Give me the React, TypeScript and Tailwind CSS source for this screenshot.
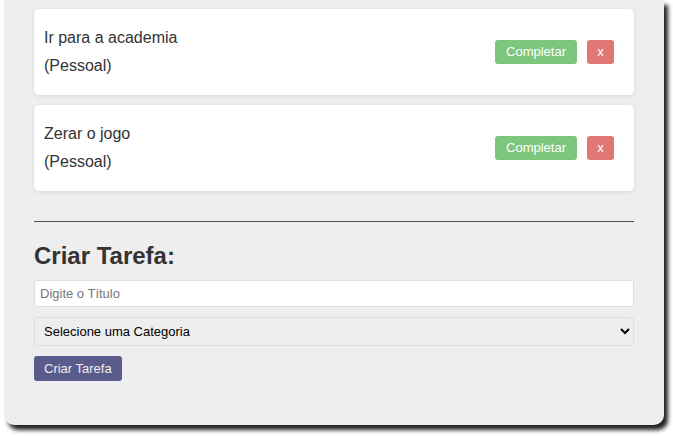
export default function App() {
  const tasks = [
    { title: 'Ir para a academia', category: 'Pessoal' },
    { title: 'Zerar o jogo', category: 'Pessoal' },
  ]

  return (
    <div className="min-h-[436px] bg-white pl-[4px] font-['Liberation_Sans',Arial,sans-serif] text-[#333]">
      <div className="w-[660px] rounded-b-[10px] bg-[#eeeeee] px-[30px] pt-[9px] pb-[44px] shadow-[4px_5px_4px_#222]">
        {/* task list */}
        <div className="flex flex-col gap-[10px]">
          {tasks.map((t) => (
            <div
              key={t.title}
              className="flex items-center justify-between rounded-[5px] bg-white py-[15px] pl-[10px] pr-[20px] shadow-[0_1px_4px_rgba(0,0,0,0.1)]"
            >
              <div className="text-[16px] leading-[28px]">
                <p>{t.title}</p>
                <p>({t.category})</p>
              </div>
              <div className="flex gap-[10px]">
                <button className="h-[24px] rounded-[3px] bg-[#7dc67e] px-[11px] text-[13px] text-white">
                  Completar
                </button>
                <button className="h-[24px] w-[27px] rounded-[3px] bg-[#e07774] text-[13px] text-white">
                  x
                </button>
              </div>
            </div>
          ))}
        </div>

        <hr className="mt-[30px] border-t border-[#555]" />

        {/* create task */}
        <h2 className="mt-[19px] text-[24px] font-bold leading-[30px]">Criar Tarefa:</h2>
        <input
          className="mt-[9px] block h-[27px] w-full rounded-[3px] border border-[#ddd] bg-white px-[5px] text-[13px] placeholder:text-[#777]"
          placeholder="Digite o Título"
        />
        <select className="mt-[10px] block h-[29px] w-full rounded-[3px] border border-[#ddd] bg-[#eeeeee] px-[5px] text-[13px] text-black">
          <option>Selecione uma Categoria</option>
        </select>
        <button className="mt-[10px] h-[25px] rounded-[3px] bg-[#5b5b8b] px-[10px] text-[13px] text-[#eee]">
          Criar Tarefa
        </button>
      </div>
    </div>
  )
}
